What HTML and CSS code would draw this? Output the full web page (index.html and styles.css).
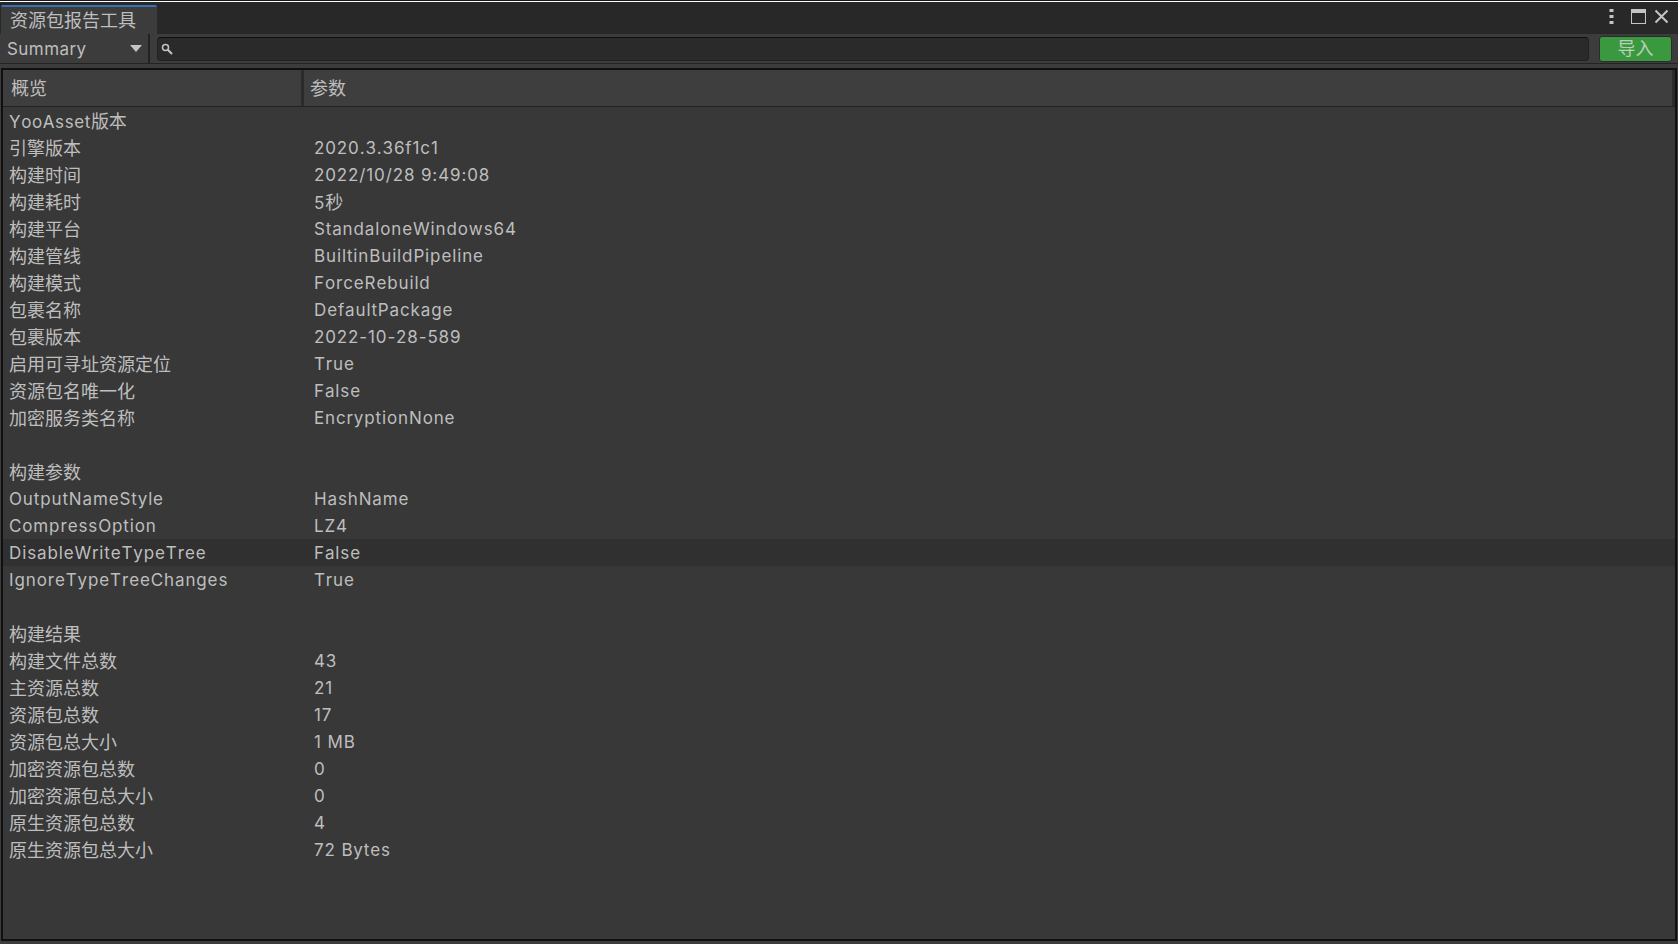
FILE: index.html
```html
<!DOCTYPE html>
<html lang="zh">
<head>
<meta charset="utf-8">
<title>资源包报告工具</title>
<link rel="stylesheet" href="styles.css">
</head>
<body>
<div class="window">
  <div class="topline"></div>
  <div class="tabbar">
    <div class="tab"><span class="c">资源包报告工具</span></div>
    <div class="winicons">
      <svg class="ic-more" width="5" height="16" viewBox="0 0 5 16"><rect x="0.500" y="0" width="4" height="3" fill="#c4c4c4"/><rect x="0.500" y="6" width="4" height="3" fill="#c4c4c4"/><rect x="0.500" y="12" width="4" height="3" fill="#c4c4c4"/></svg>
      <svg class="ic-max" width="16" height="16" viewBox="0 0 16 16"><rect x="0.500" y="0.500" width="14" height="14" fill="none" stroke="#c4c4c4"/><rect x="0" y="0" width="15" height="4" fill="#c4c4c4"/></svg>
      <svg class="ic-close" width="15" height="15" viewBox="0 0 15 15"><path d="M1.500 1.500L13.500 13.500M13.500 1.500L1.500 13.500" stroke="#c4c4c4" stroke-width="2" fill="none"/></svg>
    </div>
  </div>
  <div class="toolbar">
    <div class="dropdown"><span>Summary</span><svg width="14" height="8" viewBox="0 0 14 8"><path d="M1 0H13L7 7Z" fill="#c4c4c4"/></svg></div>
    <div class="search">
      <svg width="12" height="12" viewBox="0 0 12 12"><circle cx="4.500" cy="4.500" r="3" fill="none" stroke="#c4c4c4" stroke-width="1.500"/><path d="M6.800 6.800L11 11" stroke="#c4c4c4" stroke-width="2"/></svg>
    </div>
    <div class="import"><span class="c">导入</span></div>
  </div>
  <div class="panel">
    <div class="head">
      <div class="hcell h1"><span class="c">概览</span></div>
      <div class="hcell h2"><span class="c">参数</span></div>
    </div>
    <div class="rows">
      <div class="row"><span class="k yoo">YooAsset<span class="c">版本</span></span><span class="v"></span></div>
      <div class="row"><span class="k c">引擎版本</span><span class="v">2020.3.36f1c1</span></div>
      <div class="row"><span class="k c">构建时间</span><span class="v">2022/10/28 9:49:08</span></div>
      <div class="row"><span class="k c">构建耗时</span><span class="v">5<span class="c">秒</span></span></div>
      <div class="row"><span class="k c">构建平台</span><span class="v">StandaloneWindows64</span></div>
      <div class="row"><span class="k c">构建管线</span><span class="v">BuiltinBuildPipeline</span></div>
      <div class="row"><span class="k c">构建模式</span><span class="v">ForceRebuild</span></div>
      <div class="row"><span class="k c">包裹名称</span><span class="v">DefaultPackage</span></div>
      <div class="row"><span class="k c">包裹版本</span><span class="v">2022-10-28-589</span></div>
      <div class="row"><span class="k c">启用可寻址资源定位</span><span class="v">True</span></div>
      <div class="row"><span class="k c">资源包名唯一化</span><span class="v">False</span></div>
      <div class="row"><span class="k c">加密服务类名称</span><span class="v">EncryptionNone</span></div>
      <div class="row"></div>
      <div class="row"><span class="k c">构建参数</span><span class="v"></span></div>
      <div class="row"><span class="k">OutputNameStyle</span><span class="v">HashName</span></div>
      <div class="row"><span class="k">CompressOption</span><span class="v">LZ4</span></div>
      <div class="row hover"><span class="k">DisableWriteTypeTree</span><span class="v">False</span></div>
      <div class="row"><span class="k">IgnoreTypeTreeChanges</span><span class="v">True</span></div>
      <div class="row"></div>
      <div class="row"><span class="k c">构建结果</span><span class="v"></span></div>
      <div class="row"><span class="k c">构建文件总数</span><span class="v">43</span></div>
      <div class="row"><span class="k c">主资源总数</span><span class="v">21</span></div>
      <div class="row"><span class="k c">资源包总数</span><span class="v">17</span></div>
      <div class="row"><span class="k c">资源包总大小</span><span class="v">1 MB</span></div>
      <div class="row"><span class="k c">加密资源包总数</span><span class="v">0</span></div>
      <div class="row"><span class="k c">加密资源包总大小</span><span class="v">0</span></div>
      <div class="row"><span class="k c">原生资源包总数</span><span class="v">4</span></div>
      <div class="row"><span class="k c">原生资源包总大小</span><span class="v">72 Bytes</span></div>
    </div>
  </div>
</div>
</body>
</html>
```
FILE: styles.css
```css
* { box-sizing: border-box; }
html, body { margin: 0; padding: 0; height: 100%; overflow: hidden; background: #3c3c3c; }
body {
  font-family: Inter, "Noto Sans CJK SC", sans-serif;
  font-size: 17px;
  color: #bebebe;
  font-kerning: none;
}
.c { font-size: 18px; letter-spacing: 0; }
.window { width: 1678px; height: 944px; display: flex; flex-direction: column; }
.topline { height: 2px; flex: none; background: #fff; border-top: 1px solid #191919; }
.tabbar { height: 32px; flex: none; display: flex; justify-content: space-between; align-items: flex-end; background: #282828; padding-left: 1px; }
.tab {
  width: 156px; height: 29px; background: #3c3c3c; border-top: 2px solid #3a72b0;
  border-radius: 2px 2px 0 0; padding-left: 9px; line-height: 27px; white-space: nowrap;
}
.winicons { align-self: stretch; display: flex; align-items: center; padding: 0 9px 3px 0; }
.ic-more { margin-right: 17px; }
.ic-max { margin-right: 7px; }
.toolbar {
  height: 30px; flex: none; display: flex; align-items: stretch; background: #3c3c3c;
  border-bottom: 1px solid #232323; padding-left: 1px;
}
.dropdown {
  width: 149px; flex: none; display: flex; align-items: center; justify-content: space-between;
  padding: 0 5px 0 6px; border-right: 2px solid #232323; letter-spacing: 0.45px;
}
.search {
  flex: 1; margin: 3px 10px 2px 7px; background: #2a2a2a; border: 1px solid #212121; border-top-color: #0d0d0d;
  border-radius: 4px; display: flex; align-items: center; padding-left: 3px;
}
.import {
  width: 73px; flex: none; margin: 2px 6px 1px 0; background: #3a983f; border: 1px solid #2b2b2b;
  border-radius: 3px; text-align: center; line-height: 24px; color: #b9cfb9;
}
.panel {
  flex: 1; min-height: 0; margin: 4px 1px 3px 1px; background: #383838; border: 2px solid #101010;
  display: flex; flex-direction: column;
}
.head { height: 37px; flex: none; display: flex; background: #3e3e3e; border-bottom: 1px solid #232323; }
.hcell { line-height: 37px; }
.h1 { width: 301px; flex: none; border-right: 3px solid #2b2b2b; padding-left: 8px; }
.h2 { flex: 1; border-right: 3px solid #2b2b2b; padding-left: 6px; }
.rows { display: flex; flex-direction: column; }
.row { height: 27px; flex: none; display: flex; align-items: center; padding-top: 2px; line-height: 25px; letter-spacing: 0.87px; white-space: nowrap; }
.hover { background: #303030; }
.k { width: 311px; flex: none; padding-left: 6px; }
.yoo { letter-spacing: 0.6px; }
```
